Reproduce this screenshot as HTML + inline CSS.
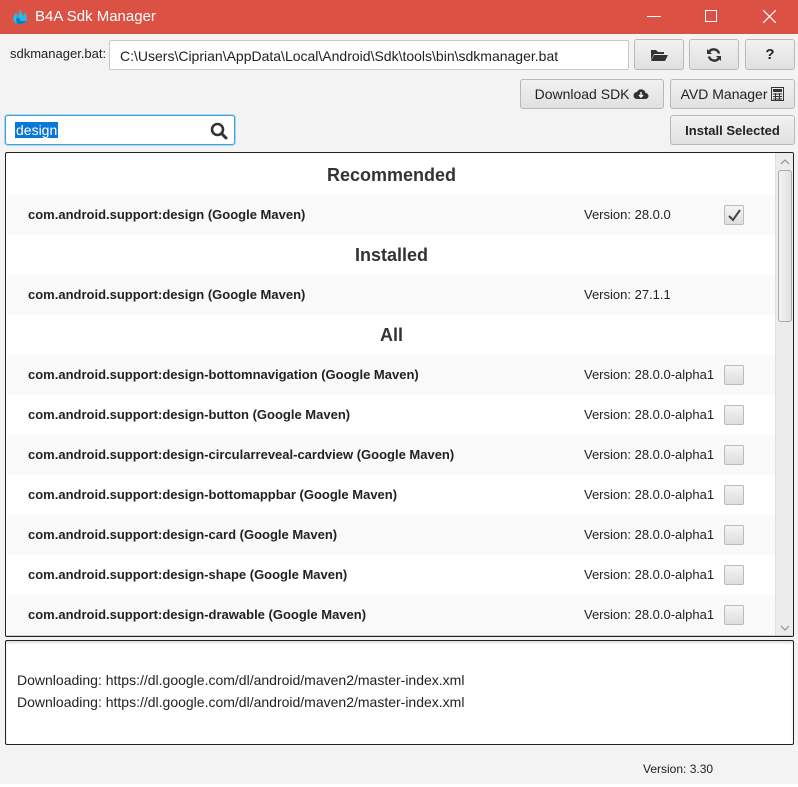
<!DOCTYPE html>
<html><head><meta charset="utf-8"><style>
*{box-sizing:border-box;margin:0;padding:0}
body{width:798px;height:787px;background:#fff;font-family:"Liberation Sans",sans-serif;position:relative;overflow:hidden;color:#222}
.win{position:absolute;left:0;top:0;width:798px;height:784px;background:#f3f3f3}
.title{position:absolute;left:0;top:0;width:798px;height:34px;background:#db5244;color:#fff;font-size:15px}
.abs{position:absolute}
.btn{position:absolute;border:1px solid #b8b8b8;border-radius:3px;background:linear-gradient(#f2f2f2,#e0e0e0);font-size:14px;color:#222;display:flex;align-items:center;justify-content:center}
.row{position:absolute;left:0;width:769px;height:40px;font-size:13px;font-weight:bold}
.row .n{position:absolute;left:21px;top:12px}
.row .v{position:absolute;left:577px;top:12px;font-weight:normal}
.cb{position:absolute;left:717px;top:10px;width:20px;height:20px;border:1px solid #bbb;border-radius:2px;background:linear-gradient(#f4f4f4,#dedede)}
.hd{position:absolute;left:0;width:769px;height:40px;text-align:center;font-size:18px;font-weight:bold;line-height:40px;color:#333}
.g{background:#f9f9f9}
</style></head><body><div class="win">
<div class="title">
<svg class="abs" style="left:11px;top:8px" width="18" height="18" viewBox="0 0 18 18"><path d="M2 10 L5 4 L7 9 L9 1 L12 8 L15 4 L16 13 Q12 17 6 16 Q2 14 2 10Z" fill="#29b6e8"/><path d="M5 11 L7 9 L10 13 L16 13 Q12 17 6 16Z" fill="#0d7fb8"/></svg>
<div class="abs" style="left:35px;top:8px">B4A Sdk Manager</div>
<div class="abs" style="left:647px;top:16px;width:14px;height:1px;background:#fff"></div>
<div class="abs" style="left:705px;top:10px;width:12px;height:12px;border:1px solid #fff"></div>
<svg class="abs" style="left:763px;top:10px" width="13" height="13"><path d="M0 0L13 13M13 0L0 13" stroke="#fff" stroke-width="1.2"/></svg>
</div>
<div class="abs" style="left:10px;top:46px;font-size:13px">sdkmanager.bat:</div>
<div class="abs" style="left:109px;top:40px;width:520px;height:30px;background:#fff;border:1px solid #c8c8c8;border-radius:2px;font-size:14px;padding:7px 0 0 10px">C:\Users\Ciprian\AppData\Local\Android\Sdk\tools\bin\sdkmanager.bat</div>
<div class="btn" style="left:634px;top:39px;width:50px;height:31px"><svg width="18" height="14" viewBox="0 0 18 14"><path d="M1 2h5l2 2h6v2H4L1 12Z" fill="#333"/><path d="M4 7h14l-3 6H1Z" fill="#333"/></svg></div>
<div class="btn" style="left:689px;top:39px;width:50px;height:31px"><svg width="16" height="16" viewBox="0 0 16 16"><path d="M13 6.5A5.5 5.5 0 0 0 3 5" stroke="#333" stroke-width="2.4" fill="none"/><path d="M1 2v5h5Z" fill="#333"/><path d="M3 9.5A5.5 5.5 0 0 0 13 11" stroke="#333" stroke-width="2.4" fill="none"/><path d="M15 14V9h-5Z" fill="#333"/></svg></div>
<div class="btn" style="left:745px;top:39px;width:50px;height:31px;font-weight:bold;font-size:15px">?</div>
<div class="btn" style="left:520px;top:79px;width:144px;height:30px">Download SDK&nbsp;<svg width="16" height="12" viewBox="0 0 16 12"><path d="M4 11a3.5 3.5 0 0 1 0-7a4.5 4.5 0 0 1 8.5 1a3 3 0 0 1 0 6Z" fill="#333"/><path d="M8 4v5M6 7l2 2 2-2" stroke="#fff" stroke-width="1.4" fill="none"/></svg></div>
<div class="btn" style="left:670px;top:79px;width:125px;height:30px">AVD Manager&nbsp;<svg width="13" height="14" viewBox="0 0 13 14"><rect x=".5" y=".5" width="12" height="13" fill="none" stroke="#333"/><rect x="2" y="2" width="9" height="3" fill="#333"/><path d="M2 7h9M2 9.5h9M2 12h9M4.5 6v7M8.5 6v7" stroke="#333"/></svg></div>
<div class="btn" style="left:670px;top:115px;width:125px;height:30px;font-weight:bold;font-size:13px">Install Selected</div>
<div class="abs" style="left:5px;top:115px;width:230px;height:30px;background:#fff;border:1px solid #3aa3dd;border-radius:3px;box-shadow:0 0 0 1px #a9d6f2">
<span class="abs" style="left:9px;top:6px;background:#0a78d4;color:#fff;font-size:14px;padding:0 1px">design</span>
<svg class="abs" style="left:204px;top:6px" width="18" height="18" viewBox="0 0 18 18"><circle cx="7.5" cy="7.5" r="5.5" stroke="#333" stroke-width="2.6" fill="none"/><path d="M11.5 11.5L16 16" stroke="#333" stroke-width="3" stroke-linecap="round"/></svg></div>
<div class="abs" style="left:5px;top:152px;width:789px;height:485px;background:#fff;border:1px solid #222;border-radius:2px;overflow:hidden">
<div class="abs" style="left:1px;top:0;width:769px;height:482px">
<div class="hd" style="top:2px">Recommended</div>
<div class="row g" style="top:42px"><span class="n">com.android.support:design (Google Maven)</span><span class="v">Version: 28.0.0</span><div class="cb"><svg class="abs" style="left:2px;top:2px" width="15" height="15"><path d="M2 8l4 4 7-10" stroke="#444" stroke-width="2" fill="none"/></svg></div></div>
<div class="hd" style="top:82px">Installed</div>
<div class="row g" style="top:122px"><span class="n">com.android.support:design (Google Maven)</span><span class="v">Version: 27.1.1</span></div>
<div class="hd" style="top:162px">All</div>
<div class="row g" style="top:202px"><span class="n">com.android.support:design-bottomnavigation (Google Maven)</span><span class="v">Version: 28.0.0-alpha1</span><div class="cb"></div></div>
<div class="row" style="top:242px"><span class="n">com.android.support:design-button (Google Maven)</span><span class="v">Version: 28.0.0-alpha1</span><div class="cb"></div></div>
<div class="row g" style="top:282px"><span class="n">com.android.support:design-circularreveal-cardview (Google Maven)</span><span class="v">Version: 28.0.0-alpha1</span><div class="cb"></div></div>
<div class="row" style="top:322px"><span class="n">com.android.support:design-bottomappbar (Google Maven)</span><span class="v">Version: 28.0.0-alpha1</span><div class="cb"></div></div>
<div class="row g" style="top:362px"><span class="n">com.android.support:design-card (Google Maven)</span><span class="v">Version: 28.0.0-alpha1</span><div class="cb"></div></div>
<div class="row" style="top:402px"><span class="n">com.android.support:design-shape (Google Maven)</span><span class="v">Version: 28.0.0-alpha1</span><div class="cb"></div></div>
<div class="row g" style="top:442px"><span class="n">com.android.support:design-drawable (Google Maven)</span><span class="v">Version: 28.0.0-alpha1</span><div class="cb"></div></div>
</div>
<div class="abs" style="left:769px;top:0;width:19px;height:485px;background:#ececec;border-left:1px solid #e0e0e0">
<svg class="abs" style="left:4px;top:6px" width="10" height="6"><path d="M1 5l4-4 4 4" stroke="#888" fill="none"/></svg>
<div class="abs" style="left:2px;top:17px;width:14px;height:152px;border:1px solid #aaa;border-radius:3px;background:linear-gradient(90deg,#f3f3f3,#e2e2e2)"></div>
<svg class="abs" style="left:4px;top:472px" width="10" height="6"><path d="M1 1l4 4 4-4" stroke="#888" fill="none"/></svg>
</div>
<div class="abs" style="left:0;top:482px;width:789px;height:3px;background:#ccc"></div>
</div>
<div class="abs" style="left:5px;top:640px;width:789px;height:105px;background:#fff;border:1px solid #222;border-radius:2px;box-shadow:inset 0 2px 2px #ddd">
<div class="abs" style="left:11px;top:28px;font-size:14px;line-height:22px;color:#222">Downloading: https://dl.google.com/dl/android/maven2/master-index.xml<br>Downloading: https://dl.google.com/dl/android/maven2/master-index.xml</div>
</div>
<div class="abs" style="left:643px;top:762px;font-size:12px">Version: 3.30</div>
</div></body></html>
